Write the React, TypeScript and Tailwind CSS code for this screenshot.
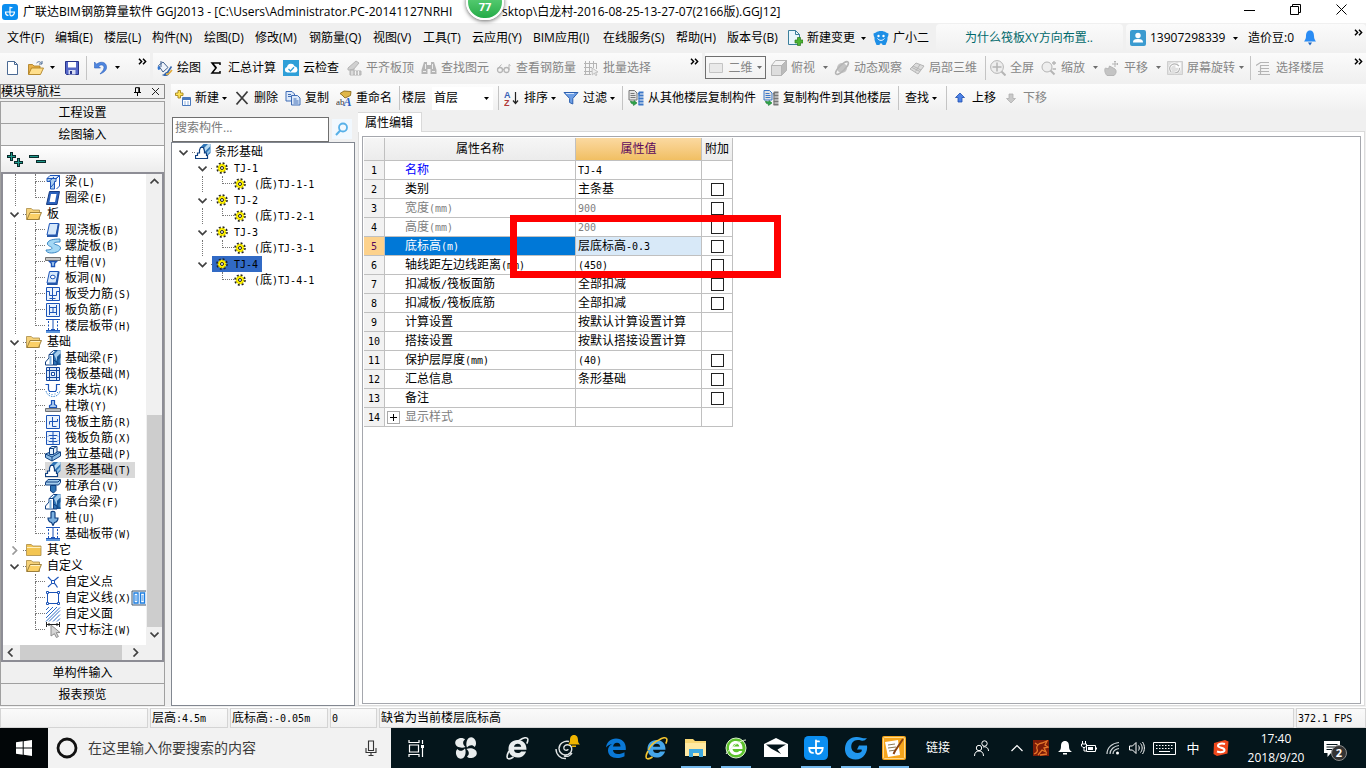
import React from "react";

type P = { children?: React.ReactNode };

const Svg = ({ children, c = "h-4 w-4", vb = "0 0 16 16" }: P & { c?: string; vb?: string }) => (
  <svg className={`${c} shrink-0`} viewBox={vb} fill="none" aria-hidden="true">
    {children}
  </svg>
);

/* Song-style text: CJK at 12px, Latin runs in a 6px-wide monospace */
const Song = ({ t }: { t: string }) => (
  <>
    {t.split(/([\x21-\x7e][\x20-\x7e]*)/).map((s, i) =>
      /^[\x21-\x7e]/.test(s) ? (
        <span key={i} className="font-['DejaVu_Sans_Mono',monospace] text-[10px] leading-none">{s}</span>
      ) : (
        s
      )
    )}
  </>
);

const Caret = ({ dim }: { dim?: boolean }) => (
  <svg className={`h-[3px] w-[5px] shrink-0 ${dim ? "text-[#6d6d6d]" : "text-black"}`} viewBox="0 0 5 3" aria-hidden="true">
    <path d="M0 0h5L2.5 3z" fill="currentColor" />
  </svg>
);
const Sep = () => <span className="h-6 w-px shrink-0 bg-[#c4c4c4]" />;
const More = () => (
  <button aria-label="更多" className="flex h-full w-4 shrink-0 items-start justify-center pt-[5px]">
    <svg className="h-[7px] w-[9px]" viewBox="0 0 9 7" fill="none" aria-hidden="true">
      <path d="M1 .8l2.6 2.7L1 6.2M5 .8l2.6 2.7L5 6.2" stroke="#000" strokeWidth="1.5" />
    </svg>
  </button>
);

/* ---------- toolbar icons ---------- */
const AppLogo = ({ c }: { c?: string }) => (
  <Svg c={c}>
    <rect width="16" height="16" rx="3" fill="#0b8ef0" />
    <path d="M8 3v7.500c0 1.500 1.800 1.800 3 .8 1-.8 1.500-2 1.500-3.300H3.500c0 2 1 3.300 2.500 3.300M8 3.600h2" stroke="#fff" strokeWidth="1.200" strokeLinecap="round" />
  </Svg>
);
const INew = () => (
  <Svg><path d="M2.500 1.500h7l3 3v10h-10z" fill="#fff" stroke="#4b6a94" /><path d="M9.500 1.500v3h3" stroke="#4b6a94" /></Svg>
);
const IOpen = () => (
  <Svg>
    <path d="M.5 14V4.500h4L6 6h6v8z" fill="#e8b14a" stroke="#a87818" strokeWidth=".8" />
    <path d="M.5 14.500L3.500 8H15.500l-3 6.500z" fill="#ffdf8c" stroke="#a87818" strokeWidth=".8" />
    <path d="M8.500 3c2-2 4-1.500 5 .5M14 1v3h-3" stroke="#4b6a94" />
  </Svg>
);
const ISave = () => (
  <Svg>
    <path d="M1.500 1.500h13v13h-12l-1-1z" fill="#5567c8" stroke="#27338b" />
    <path d="M4 2h8v5.500H4z" fill="#fff" /><path d="M4.500 10h7v4.500h-7z" fill="#d7dcf2" /><path d="M6 11h2v3H6z" fill="#27338b" />
  </Svg>
);
const IUndo = () => (
  <Svg><path d="M1.500 2v6h6L5.700 6.200c2-2.200 5.300-1.500 5.300 1.300 0 2.500-2 4-4 6.500 4-1.500 7-4 6.500-7.500C13 2 7.500.8 3.700 4.200z" fill="#4f86e0" stroke="#2b5fb8" strokeWidth=".6" /></Svg>
);
const IPaint = () => (
  <Svg>
    <path d="M1.500 5.500L6 2l5 5.500L6 12z" fill="#eef3fa" stroke="#41618f" /><path d="M4 1v6" stroke="#41618f" />
    <path d="M1 6c-.8 2-.3 4 1 4s1-3 1-3z" fill="#2f74d0" />
    <path d="M14.500 6.500l-4 6M10.500 12.500c-2-.5-2 2-3.500 2.500 2 .8 4.500.2 4.500-2z" stroke="#3568b0" strokeWidth="1.600" />
    <path d="M9 14.500c2-.2 3.500-1 6-4.500" stroke="#e2ab3c" strokeWidth="1.500" />
  </Svg>
);
const ISum = () => <Svg><path d="M12 5V3H4l4 5-4 5h8v-2M4.500 3.300l4 4.700" stroke="#000" strokeWidth="1.500" /></Svg>;
const ICloud = () => (
  <Svg>
    <rect width="16" height="16" fill="#2e9fd8" />
    <path d="M4.300 12.500a2.800 2.800 0 01-.3-5.500 4 4 0 017.600-.8 3.200 3.200 0 01.4 6.300z" fill="#fff" />
    <path d="M5.500 9l2 2L11 7.200" stroke="#2e9fd8" strokeWidth="1.300" />
  </Svg>
);
const G = "#b5b5b5";
const IFlat = () => <Svg><path d="M2 8l8-7 3 2-6 7H2z" fill="#d0d0d0" stroke={G} /><path d="M4 15v-5l4-1v2h7v4z" fill="#c4c4c4" stroke={G} /><path d="M6 11v4M9.500 11v4M12.500 11v4" stroke="#f2f2f2" /></Svg>;
const IBino = () => <Svg><path d="M3 2h3v3h4V2h3l2.500 8v4h-6V9h-3v5h-6v-4z" fill={G} /><path d="M4.500 4v5M11.500 4v5M2 11.500h3M11 11.500h3" stroke="#eee" /></Svg>;
const IGlass = () => <Svg><circle cx="4" cy="10" r="2.500" stroke={G} strokeWidth="1.300" /><circle cx="10.500" cy="10" r="2.500" stroke={G} strokeWidth="1.300" /><path d="M6.500 9.500h1.500M13 10V4.500l1.500 1M1.500 9l4-4.500" stroke={G} /></Svg>;
const IBatch = () => <Svg><path d="M2.500 1v14M6.500 1v14M10.500 1v7M1 3.500h13M1 7.500h8M1 11.500h8M13.500 3v6M1 14.500h7" stroke={G} /><path d="M9 8l6 4-2.500.6 1.500 2.400-1.300.6-1.400-2.500L9.300 15z" fill="#eee" stroke={G} strokeWidth=".8" /></Svg>;
const I2D = () => <Svg><path d="M1.500 3.500h13v9h-13z" fill="#e9e9e9" stroke="#c4c4c4" /></Svg>;
const ICube = () => <Svg><path d="M.5 5.500h10v10H.5z" fill="#ddd" stroke={G} /><path d="M.5 5.500l4-5h11l-5 5z" fill="#f3f3f3" stroke={G} /><path d="M10.500 5.500l5-5v10l-5 5z" fill="#bbb" stroke={G} /></Svg>;
const IOrbit = () => <Svg><circle cx="8" cy="8" r="5" fill="#c4c4c4" /><ellipse cx="8" cy="8" rx="8.500" ry="2.800" transform="rotate(-45 8 8)" stroke={G} strokeWidth="1.500" /></Svg>;
const ILocal = () => <Svg><path d="M1 9l6-6 8 3-6 8z" fill="#dcdcdc" stroke={G} /><path d="M4 6l8 4M6.500 11.500L11 4.500M3 7.500l8 4" stroke={G} /></Svg>;
const IFull = () => <Svg><circle cx="7" cy="7" r="6.400" fill="#eee" stroke={G} /><path d="M7 2.500v9M2.500 7h9" stroke={G} strokeWidth="1.500" /><path d="M11.500 11.500L15.500 15.500" stroke={G} strokeWidth="2" /></Svg>;
const IZoom = () => <Svg><circle cx="6" cy="7" r="5" fill="#eee" stroke={G} /><path d="M9.500 10.500l4 4" stroke={G} strokeWidth="2" /><path d="M11 3h4M13 1v4M11.500 9H15" stroke={G} strokeWidth="1.300" /></Svg>;
const IPan = () => <Svg><path d="M3 15.500c-2-2-3-6-1.500-7.500l3 1L5.500 6l5.500 3c2 2 1 5-1 6.500z" fill="#c4c4c4" stroke={G} /><path d="M11 1v6M8 4h6M10 2l1-1 1 1M13 3l1 1-1 1" stroke={G} /></Svg>;
const IRot = () => <Svg><path d="M.5 1.500h15v13H.5z" fill="#e0e0e0" stroke="#cfcfcf" /><path d="M4 12c-4-6 3-11 8-6M12.500 2.500v4h-4M12.500 8c0 3-2 5-5 5" stroke="#fff" strokeWidth="2.600" /><path d="M4 12c-4-6 3-11 8-6M12.500 8c0 3-2 5-5 5" stroke={G} strokeWidth="1.200" /></Svg>;
const IFloors = () => <Svg><path d="M0 5.500L4.500 2.500H13M4 5.500h9M4 8.500h9M2 11.500h11M2 14.500h12M4.500 6v8" stroke={G} strokeWidth="1.200" /></Svg>;
const IAdd = () => (
  <Svg>
    <path d="M7.500 7.500h8v8h-8z" fill="#fff" stroke="#4a79bd" /><path d="M8 8h7v2H8z" fill="#4a79bd" /><path d="M9 12h2M12 12h2M9 14h2M12 14h2" stroke="#8fb1de" />
    <path d="M3 .5h2.500v2.500H8v2.500H5.500V8H3V5.500H.5V3H3z" fill="#ffe357" stroke="#a4831d" strokeWidth=".9" />
  </Svg>
);
const IDel = () => <Svg><path d="M2.500 2l11 12M13.500 1.500l-11 13" stroke="#3c3c3c" strokeWidth="1.800" /></Svg>;
const ICopy = () => (
  <Svg>
    <path d="M1 1.500h6l2.500 2.500v7H1z" fill="#dce9fa" stroke="#3f6cb5" /><path d="M6.500 5.500h6L15 8v7H6.500z" fill="#dce9fa" stroke="#3f6cb5" />
    <path d="M3 4.500h3M3 6.500h3M8.500 9h3M8.500 11h5M8.500 13h5" stroke="#3f6cb5" />
  </Svg>
);
const IRename = () => (
  <Svg>
    <path d="M4 3.500L8 1l7 .5-.5 4L9 8 6 5z" fill="#dfb649" stroke="#8a6a1c" strokeWidth=".9" />
    <text x="0" y="15" fontSize="9" fontFamily="Liberation Serif" fill="#333">ab</text>
    <text x="7.500" y="15.500" fontSize="12" fontWeight="bold" fontStyle="italic" fontFamily="Liberation Serif" fill="#2b5fc0">A</text>
  </Svg>
);
const ISort = () => (
  <Svg>
    <text x="0" y="7.500" fontSize="9" fontWeight="bold" fontFamily="Liberation Sans" fill="#3761b5">A</text>
    <text x="0" y="15.500" fontSize="9" fontWeight="bold" fontFamily="Liberation Sans" fill="#b03a3a">Z</text>
    <path d="M11.500 2v11M9 10.500l2.500 3 2.500-3" stroke="#222" strokeWidth="1.200" />
  </Svg>
);
const IFilter = () => <Svg><path d="M1 2.500h14L9.800 8.500V14l-3.200-1.500v-4z" fill="#6e9fe6" stroke="#2c5fae" /><path d="M3 3.500h8" stroke="#d6e6fb" /></Svg>;
const IFrom = ({ a = "#777", b = "#3d78c8" }: { a?: string; b?: string }) => (
  <Svg>
    <path d="M1 .5h5.500L9 3v7H1z" fill="#e4e4e4" stroke={a} /><path d="M2.500 3.500h4M2.500 5.500h5M2.500 7.500h5" stroke={a} />
    <path d="M15.500 2.500h-4l-1 2M15.500 5.500h-5M15.500 8.500h-5M15.500 11.500h-5M15.500 14.500h-5" stroke={b} strokeWidth="1.800" /><path d="M11 3v12" stroke={b} />
    <path d="M2.500 11l3 1 .5-1.500L9 13l-3.500 2.500V14C3.500 14 2.500 13 2.500 11z" fill="#2fa54a" stroke="#1c7a32" strokeWidth=".6" />
  </Svg>
);
const IUp = ({ fill, stroke, flip }: { fill: string; stroke: string; flip?: boolean }) => (
  <Svg><path d={flip ? "M8 13L3.500 8.500h2.500V4h4v4.500h2.500z" : "M8 3l4.500 4.500H10V12H6V7.500H3.500z"} fill={fill} stroke={stroke} strokeWidth=".8" /></Svg>
);

function Tool({ w, icon, label, dim, caret, gap = "ml-2" }: { w: string; icon?: React.ReactNode; label: string; dim?: boolean; caret?: boolean; gap?: string }) {
  return (
    <button className={`flex h-6 shrink-0 items-center whitespace-nowrap ${w} ${dim ? "text-[#868686]" : "text-black"}`}>
      {icon && <span className="mr-1 flex">{icon}</span>}
      {label}
      {caret && <span className={`flex ${gap}`}><Caret dim={dim} /></span>}
    </button>
  );
}

/* ---------- tree icons ---------- */
const B = "#1c54b8";
const Folder = ({ open }: { open?: boolean }) =>
  open ? (
    <Svg>
      <path d="M.5 13.500V2.500h4.800l1.500 1.500h6.700v9.500z" fill="#f6d27a" stroke="#a98a45" strokeWidth=".8" />
      <path d="M1 13.500L4 6.500h11.500l-3 7z" fill="#fbd067" stroke="#8c7030" strokeWidth=".8" />
      <path d="M4.500 7.500h9.500" stroke="#fff1c4" />
    </Svg>
  ) : (
    <Svg><path d="M.5 13.500V2.500h4.800l1.500 1.500h8.200v9.500z" fill="#f3c552" stroke="#a98a45" strokeWidth=".8" /><path d="M1 5.500h13.500" stroke="#fff0be" /></Svg>
  );
const D = "#0f3f80";
const Beam = () => (
  <>
    <path d="M7 4l4-4h4.500v15H7z" fill="#2f74b5" />
    <path d="M9 4.500L13 .5h2.500v3L12 7v4z" fill="#a5cdec" />
    <path d="M12 15V7l3.500-3.500V8l-2 2v2.500l2 1V15z" fill="#1b5896" />
    <path d="M.5 15v-3L4 8V4.500h4.500V15z" fill="#fff" stroke={D} />
    <path d="M8.500 4.500v10.500M8.500 10l3.500 2v3H8.500M4.500 4L8.500.5H12" stroke={D} />
    <path d="M5.500 6v8.500" stroke="#7fb2df" strokeWidth="2" />
  </>
);
const Strip = () => (
  <>
    <path d="M5.500 3L8.500 0h7v9l-3.500 3z" fill="#2f74b5" />
    <path d="M9 4L13 0h2.500v2L10 7.500z" fill="#b9dbf2" />
    <path d="M10.500 9.500l5-5v3L12 11z" fill="#8ec0e6" />
    <path d="M.5 14.500v-3H2.500V9H4.500V6L5.500 3.500h3L9.500 7v2h2v2.500h1v3z" fill="#fff" stroke={D} strokeWidth="1.200" />
  </>
);
const Grid = ({ d }: { d: string }) => (
  <><path d="M1.500 1.500h13v13h-13z" fill="#eaf3fd" stroke={B} /><path d={d} stroke={B} /></>
);
const shapes: Record<string, React.ReactNode> = {
  liang: <><path d="M2 4.500l3-3h9.500L11 4.500z" fill="#e3eff9" stroke={B} /><path d="M2 4.500h9v3H9.500V15h-4V7.500H2z" fill="#a9cdee" stroke={B} /><path d="M11 5l3.500-3.500V12l-3 3M4 7.500L9 3M6 13l3.500-4" stroke={B} /></>,
  quan: <><path d="M4.500 1.500h10L12 14.500H1.500z" fill="#2b62bd" stroke="#173c82" /><path d="M6 4h5.500L10 12H4.500z" fill="#fff" /></>,
  ban: <><path d="M4.500 1.500h9L11 13H2z" fill="#d5e8fb" stroke={B} /><path d="M13 1.500h1.500v1L12.500 15H2v-2h9z" fill="#2456a8" /></>,
  luo: <path d="M1 12c3 0 6-.5 6-2S1.500 8 2.500 5 8 1 15 1v3c-3 0-6 .3-6 1.500S15.500 7 15.500 10s-5 5-9 5c-3 0-5.500-1-5.500-3z" fill="#a4d8f5" stroke="#3a86c4" />,
  mao: <><path d="M.5 3.500h15v3H.5z" fill="#c4c4c4" stroke="#6f6f6f" /><path d="M4.500 7.500h7L9.500 9.500v3h-3v-3z" fill="#b5d7f3" stroke={B} strokeWidth="1.400" /></>,
  dong: <><path d="M4.500 1.500h9L11 13H2z" fill="#d5e8fb" stroke={B} /><path d="M13 1.500h1.500v1L12.500 15H2v-2h9z" fill="#2456a8" /><ellipse cx="7.800" cy="7" rx="2.400" ry="1.800" stroke={B} fill="#fff" /></>,
  shou: <Grid d="M2 5.500h2.500M7.500 2v12M4.500 5.500v4h7v-4H14M4.500 12.500h6" />,
  fu: <Grid d="M4.500 3v10M11.500 3v10M4.500 5.500h7M4.500 10.500h7M8 5.500v5" />,
  dai: <><path d="M1 12h14v3H1z" fill="#5d96dc" /><path d="M1 1.500h14M8 2v10M6 11.500h4M1 12.500h14" stroke={B} /><path d="M3.500 3v9M12.500 3v9" stroke={B} strokeDasharray="2 1.500" /></>,
  beam: <Beam />,
  fa: <><path d="M1.500 1.500h13v13h-13z" fill="#dceafa" stroke="#15489f" /><path d="M4.500 1v14M11.500 1v14M1 4.500h14M1 11.500h14" stroke="#15489f" /><path d="M6.500 6.500h3v3h-3z" fill="#fff" stroke="#15489f" /></>,
  keng: <><path d="M.5 2.500h3v5l1 2h6l1-2v-5h3.500" stroke={B} strokeWidth="1.200" /><path d="M1 9c1 4 4 5.500 7 5.500S14 13 15 9M4.500 11v1M7 12v1M10 11.500v1M12.500 10v1" stroke="#4b8fd4" strokeDasharray="1.500 1" /></>,
  dun: <><path d="M4.500 9.500V7.500l2-1v-4h3v4l2 1v2z" fill="#aecdf0" stroke={B} strokeWidth="1.200" /><path d="M.5 10.500h15v3H.5z" fill="#b9bcc0" stroke="#6d7278" /></>,
  zhu: <Grid d="M4.500 7.500h8M7.500 3v9.500M4.500 7.500v3M7.500 12.500h4M12.500 5v2.500" />,
  fu2: <Grid d="M8 2v12M4 5.500h8M5 8.500h6M4 11.500h8M4 5.500l-1 1M12 5.500l1 1M4 11.500l-1-1M12 11.500l1-1" />,
  du: <><path d="M.5 8l6-2.500L15.500 6v4L7 15 .5 11.500z" fill="#8ebfe6" stroke={D} /><path d="M.5 8L7 11l8.500-5M7 11v4" stroke={D} /><path d="M4.500 2l2.500-1.500h5V6L8.500 8.500h-4z" fill="#e4f0fa" stroke={D} /><path d="M8.500 2.500v6M4.500 2.500h4l3-2" stroke={D} /></>,
  strip: <Strip />,
  tai: <><path d="M.5 4.500L3 1.500h12.500v3l-2 2.500H.5z" fill="#a5cdec" stroke={D} /><path d="M.5 4h12.500L15 2" stroke={D} /><path d="M5.500 7.500H11v5L8.500 15l-3-2z" fill="#2f74b5" stroke={D} /></>,
  pile: <path d="M6 8V2.500C6 1 10 1 10 2.500V8h3c0 2.500-1.500 4-3.500 4.500L8 15.500l-1.500-3C4.500 12 3 10.500 3 8z" fill="#7cb1e0" stroke={D} strokeWidth="1.200" />,
  dian: <><path d="M3 3c2 2 3 3.500 5 5s3 3 4.500 5.500M13.500 3C11 5 9.500 6 8 8s-3 3-5 5" stroke={B} strokeWidth="1.200" /><path d="M6.500 6.500h3v3h-3z" fill="#fff" stroke={B} /></>,
  xian: <><path d="M2.500 2.500h11v11h-11z" stroke={B} /><path d="M1.500 1.500h2v2h-2zM12.500 1.500h2v2h-2zM1.500 12.500h2v2h-2zM12.500 12.500h2v2h-2z" fill="#fff" stroke={B} /></>,
  mian: <path d="M1 4l3-3M1 8l7-7M1 12l11-11M1 15.500L15 1.500M4 15.500L15 4.500M8 15.500l7-7M12 15.500l3-3" stroke="#2c6bc4" />,
  chi: <><path d="M1.500 0v5M14.500 0v5M2 2.500h12M4 1v3M12 1v3" stroke="#222" /><path d="M6 3l9 7.500-3.800.2 2.200 3.800-2 1-2-3.800L6 14z" fill="#d6d6d6" stroke="#8b8b8b" /></>,
};

const Chev = ({ right }: { right?: boolean }) => (
  <Svg c="h-[9px] w-[9px]" vb="0 0 9 9">
    <path d={right ? "M2.500 .5l4 4-4 4" : "M.5 2.500l4 4 4-4"} stroke={right ? "#9a9a9a" : "#404040"} strokeWidth="1.700" />
  </Svg>
);

type Item = [string, string];
const groups: { name?: string; open?: boolean; items: Item[] }[] = [
  { items: [["liang", "梁(L)"], ["quan", "圈梁(E)"]], open: true },
  {
    name: "板", open: true,
    items: [["ban", "现浇板(B)"], ["luo", "螺旋板(B)"], ["mao", "柱帽(V)"], ["dong", "板洞(N)"], ["shou", "板受力筋(S)"], ["fu", "板负筋(F)"], ["dai", "楼层板带(H)"]],
  },
  {
    name: "基础", open: true,
    items: [["beam", "基础梁(F)"], ["fa", "筏板基础(M)"], ["keng", "集水坑(K)"], ["dun", "柱墩(Y)"], ["zhu", "筏板主筋(R)"], ["fu2", "筏板负筋(X)"], ["du", "独立基础(P)"], ["strip", "条形基础(T)"], ["tai", "桩承台(V)"], ["beam", "承台梁(F)"], ["pile", "桩(U)"], ["dai", "基础板带(W)"]],
  },
  { name: "其它", open: false, items: [] },
  { name: "自定义", open: true, items: [["dian", "自定义点"], ["xian", "自定义线(X)"], ["mian", "自定义面"], ["chi", "尺寸标注(W)"]] },
];

function NavTree() {
  return (
    <ul className="min-w-0 flex-1 overflow-hidden bg-white leading-4">
      {groups.map((g, gi) => (
        <li key={gi}>
          {g.name && (
            <button className="flex h-4 items-center pl-[7px]">
              <Chev right={!g.open} />
              <span className="ml-1 w-[3px] border-t border-dotted border-[#777]" />
              <span className="flex"><Folder open={g.open} /></span>
              <span className="ml-[5px]">{g.name}</span>
            </button>
          )}
          <ul>
            {g.items.map(([k, t], i) => (
              <li key={t + i} className="flex h-4 items-center whitespace-nowrap pl-3">
                <span className={`h-4 w-5 shrink-0 border-l border-dotted ${gi === groups.length - 1 ? "border-transparent" : "border-[#777]"}`} />
                <span className="flex h-4 w-[10px] shrink-0 flex-col">
                  <span className="h-2 border-b border-l border-dotted border-[#777]" />
                  {i < g.items.length - 1 && <span className="h-2 border-l border-dotted border-[#777]" />}
                </span>
                <button className={`flex h-4 items-center pr-1 ${k === "strip" ? "bg-[#d9d9d9]" : ""}`}>
                  <Svg>{shapes[k]}</Svg>
                  <span className="ml-1"><Song t={t} /></span>
                </button>
                {k === "xian" && (
                  <svg className="-ml-1 h-4 w-4 shrink-0" viewBox="0 0 16 16" fill="none" aria-hidden="true">
                    <path d="M1 1h15v14H1z" fill="#eaf4ff" stroke="#44586e" />
                    <path d="M3 3h4v10H3zM9.500 3h4v10h-4z" fill="#fff" stroke="#1f7fe0" strokeWidth="1.300" />
                    <path d="M4 6h2M4 8h2M4 10h2M10.500 6h2M10.500 8h2M10.500 10h2" stroke="#1f7fe0" />
                  </svg>
                )}
              </li>
            ))}
          </ul>
        </li>
      ))}
    </ul>
  );
}

const NavButton = ({ children }: P) => (
  <button className="flex h-[22px] w-full shrink-0 items-center justify-center border-b border-[#a0a0a0] bg-[#f0f0f0] pt-px">{children}</button>
);
const Arrow = ({ d, label }: { d: string; label: string }) => (
  <button aria-label={label} className="flex h-[15px] w-[15px] shrink-0 items-center justify-center">
    <Svg c="h-[9px] w-[9px]" vb="0 0 9 9"><path d={d} stroke="#404040" strokeWidth="1.700" /></Svg>
  </button>
);

function LeftPanel() {
  return (
    <aside className="flex w-[165px] shrink-0 flex-col">
      <header className="flex h-[15px] shrink-0 items-center border border-[#8a8a8a] leading-[13px]">
        <span className="-mt-px text-[12px]">模块导航栏</span>
        <button aria-label="固定" className="ml-auto flex">
          <Svg c="h-[9px] w-[9px]" vb="0 0 9 9"><path d="M2.500 5V.7h4V5M1 5.500h7M4.500 5.500V9M5.800 1v4" stroke="#000" /></Svg>
        </button>
        <button aria-label="关闭" className="mr-1 ml-[9px] flex">
          <Svg c="h-[9px] w-[9px]" vb="0 0 9 9"><path d="M1 1l7 7M8 1L1 8" stroke="#222" /></Svg>
        </button>
      </header>
      <div className="mt-[2px] flex min-h-0 flex-1 flex-col overflow-hidden border border-b-0 border-[#a0a0a0]">
        <NavButton>工程设置</NavButton>
        <NavButton>绘图输入</NavButton>
        <div className="flex h-[26px] shrink-0 items-center gap-[6px] bg-linear-to-b from-white to-[#ececec] pl-[5px]">
          <button aria-label="全部展开" className="flex">
            <Svg c="h-[17px] w-[17px]" vb="0 0 17 17">
              <path d="M4 1h3v3h3v3H7v3H4V7H1V4h3z" fill="#0b2b2b" /><path d="M11 7h3v3h3v3h-3v3h-3v-3H8v-3h3z" fill="#0b2b2b" />
              <path d="M5.500 2v7M2 5.500h7M12.500 8v7M9 11.500h7" stroke="#1f9a8c" />
            </Svg>
          </button>
          <button aria-label="全部折叠" className="flex">
            <Svg c="h-[17px] w-[17px]" vb="0 0 17 17"><path d="M0 4h10v3H0zM7 9h10v3H7z" fill="#0b2b2b" /><path d="M1 5.500h8M8 10.500h8" stroke="#1f9a8c" /></Svg>
          </button>
        </div>
        <div className="flex min-h-0 flex-1 flex-col overflow-hidden border-2 border-[#8d8d95] bg-[#f0f0f0]">
          <div className="flex min-h-0 flex-1">
            <NavTree />
            <div className="flex w-4 shrink-0 flex-col items-center">
              <Arrow label="向上" d="M.5 6.500l4-4 4 4" />
              <span className="flex-1" />
              <span className="h-[212px] w-[15px] bg-[#cdcdcd]" />
              <Arrow label="向下" d="M.5 2.500l4 4 4-4" />
              <span className="h-[3px]" />
            </div>
          </div>
          <div className="flex h-[15px] shrink-0 items-center">
            <Arrow label="向左" d="M6.500 .5l-4 4 4 4" />
            <span className="ml-[2px] h-full w-[102px] bg-[#cdcdcd]" />
            <span className="ml-[6px] flex"><Arrow label="向右" d="M2.500 .5l4 4-4 4" /></span>
          </div>
        </div>
        <NavButton>单构件输入</NavButton>
        <NavButton>报表预览</NavButton>
      </div>
    </aside>
  );
}

const Gear = () => (
  <Svg c="h-3 w-3" vb="0 0 12 12">
    <circle cx="6" cy="6" r="5" stroke="#222" strokeWidth="1.600" strokeDasharray="2 1.930" />
    <circle cx="6" cy="6" r="4.300" fill="#fff200" />
    <circle cx="6" cy="6" r="3.800" stroke="#55520a" strokeWidth=".8" strokeDasharray="1 2" />
    <circle cx="6" cy="6" r="1.500" fill="#fff" stroke="#222" />
  </Svg>
);

function MiddlePanel() {
  return (
    <section className="flex w-[184px] shrink-0 flex-col pt-1">
      <div className="flex h-[26px] shrink-0 items-center">
        <input aria-label="搜索构件" placeholder="搜索构件..." className="ml-px h-[25px] w-[157px] border border-[#6f6f6f] bg-white px-[2px] pb-1 text-[12px] outline-none placeholder:text-[#7a7a7a]" />
        <button aria-label="搜索" className="ml-[3px] flex h-5 w-5 items-center justify-center bg-[#f1f8fe]">
          <Svg c="h-[14px] w-[14px]" vb="0 0 14 14"><circle cx="8" cy="5.500" r="4" stroke="#57b0e8" strokeWidth="1.800" /><path d="M5.200 8.500L1 13" stroke="#57b0e8" strokeWidth="2" /></Svg>
        </button>
      </div>
      <div className="min-h-0 flex-1 overflow-hidden border border-[#828790] bg-white pt-px">
        <ul className="leading-4">
          <li>
            <button className="flex h-4 items-center pl-[7px]">
              <Chev />
              <span className="ml-1 w-[3px] border-t border-dotted border-[#777]" />
              <Svg>{shapes.strip}</Svg>
              <span className="ml-1">条形基础</span>
            </button>
            <ul>
              {[1, 2, 3, 4].map((n) => (
                <li key={n}>
                  <div className="flex h-4 items-center pl-[26px]">
                    <Chev />
                    <span className="ml-1 w-px border-t border-dotted border-[#777]" />
                    <button className={`flex h-4 items-center pr-1 pl-1 ${n === 4 ? "bg-[#316ac5]" : ""}`}>
                      <Gear />
                      <span className="ml-[6px]"><Song t={`TJ-${n}`} /></span>
                    </button>
                  </div>
                  <div className="flex h-4 items-center pl-[30px]">
                    <span className={`h-4 w-5 border-l border-dotted ${n === 4 ? "border-transparent" : "border-[#777]"}`} />
                    <span className="-mt-2 h-2 w-[12px] border-b border-l border-dotted border-[#777]" />
                    <button className="flex h-4 items-center">
                      <Gear />
                      <span className="ml-2"><Song t="(" />底<Song t={`)TJ-${n}-1`} /></span>
                    </button>
                  </div>
                </li>
              ))}
            </ul>
          </li>
        </ul>
      </div>
    </section>
  );
}

type Row = { name: string; value: string; check?: boolean; cls?: string };
const rows: Row[] = [
  { name: "名称", value: "TJ-4", cls: "text-[#0000ff]" },
  { name: "类别", value: "主条基", check: true },
  { name: "宽度(mm)", value: "900", check: true, cls: "text-[#808080]" },
  { name: "高度(mm)", value: "200", check: true, cls: "text-[#808080]" },
  { name: "底标高(m)", value: "层底标高-0.3", check: true },
  { name: "轴线距左边线距离(mm)", value: "(450)", check: true },
  { name: "扣减板/筏板面筋", value: "全部扣减", check: true },
  { name: "扣减板/筏板底筋", value: "全部扣减", check: true },
  { name: "计算设置", value: "按默认计算设置计算" },
  { name: "搭接设置", value: "按默认搭接设置计算" },
  { name: "保护层厚度(mm)", value: "(40)", check: true },
  { name: "汇总信息", value: "条形基础", check: true },
  { name: "备注", value: "", check: true },
  { name: "显示样式", value: "", cls: "text-[#808080]" },
];

function PropertyPanel() {
  const cell = "h-[19px] border-r border-b border-[#c0c0c0] p-0 leading-4";
  return (
    <section className="flex min-w-0 flex-1 flex-col">
      <div className="flex h-5 shrink-0">
        <button className="h-[21px] border-t border-r border-[#d9d9d9] bg-white pr-2 pl-[7px] leading-5">属性编辑</button>
        <span className="flex-1 border-b border-[#d9d9d9] bg-[#f0f0f0]" />
      </div>
      <div className="flex min-h-0 flex-1 flex-col border-r border-b border-l border-[#dcdcdc] bg-white p-[3px] pt-1 pb-px">
        <div className="min-h-0 flex-1 border border-[#a5a7ad] pt-px pl-px">
          <div className="relative">
            <table className="w-[369px] table-fixed border-separate border-spacing-0">
              <thead>
                <tr className="h-[23px] bg-linear-to-b from-[#f6f6f6] to-[#ebebeb]">
                  <th className="w-[21px] border-r border-b border-[#c0c0c0] p-0" aria-label="序号" />
                  <th className="w-[191px] border-r border-b border-[#c0c0c0] p-0 font-normal">属性名称</th>
                  <th className="w-[126px] border-r border-b border-[#c0c0c0] bg-linear-to-b from-[#fbd9a0] to-[#f1bf62] p-0 font-normal text-[#5c0a5c]">属性值</th>
                  <th className="w-[31px] border-r border-b border-[#c0c0c0] p-0 font-normal">附加</th>
                </tr>
              </thead>
              <tbody>
                {rows.map((r, i) => {
                  const sel = i === 4;
                  return (
                    <tr key={i} className={r.cls === "text-[#808080]" ? "text-[#808080]" : ""}>
                      <td className={`${cell} text-center ${sel ? "bg-[#fdd28c] text-[#5c0a5c]" : "bg-[#f2f2f2] text-black"}`}><Song t={String(i + 1)} /></td>
                      <td className={`${cell} whitespace-nowrap ${sel ? "bg-[#0078d7] text-white" : ""} ${r.cls ?? ""}`}>
                        <div className="flex items-center">
                          <span className="flex w-5 shrink-0 pl-[2px]">
                            {i === 13 && (
                              <button aria-label="展开" className="flex h-[13px] w-[13px] items-center justify-center border border-[#a9a9a9] bg-white">
                                <Svg c="h-[7px] w-[7px]" vb="0 0 7 7"><path d="M0 3.500h7M3.500 0v7" stroke="#000" /></Svg>
                              </button>
                            )}
                          </span>
                          <span><Song t={r.name} /></span>
                        </div>
                      </td>
                      <td className={`${cell} pl-[2px] ${sel ? "bg-[#d8e9f8]" : ""}`}><Song t={r.value} /></td>
                      <td className={`${cell} text-center`}>
                        {r.check && (
                          <input type="checkbox" aria-label={`附加 ${r.name}`} className="mx-auto mt-px block h-[13px] w-[13px] appearance-none border border-[#222] bg-white" />
                        )}
                      </td>
                    </tr>
                  );
                })}
              </tbody>
            </table>
            <div className="pointer-events-none absolute top-[77px] left-[146px] h-[63px] w-[271px] border-[7px] border-[#ff0000]" />
          </div>
        </div>
      </div>
    </section>
  );
}

const menus: [string, string][] = [
  ["文件(F)", "w-12"], ["编辑(E)", "w-[49px]"], ["楼层(L)", "w-12"], ["构件(N)", "w-[52px]"], ["绘图(D)", "w-[51px]"],
  ["修改(M)", "w-[54px]"], ["钢筋量(Q)", "w-16"], ["视图(V)", "w-[50px]"], ["工具(T)", "w-[49px]"], ["云应用(Y)", "w-[61px]"],
  ["BIM应用(I)", "w-[70px]"], ["在线服务(S)", "w-[73px]"], ["帮助(H)", "w-[51px]"], ["版本号(B)", "w-[60px]"],
];

function TopBars() {
  const strip = "flex items-center bg-linear-to-b from-[#fbfbfb] to-[#f0f0f0]";
  return (
    <>
      <header className="flex h-[23px] shrink-0 items-center bg-white pl-[2px]">
        <AppLogo />
        <h1 className="ml-[5px] flex whitespace-nowrap text-[12px]">
          <span className="w-[479px]">广联达BIM钢筋算量软件 GGJ2013 - [C:\Users\Administrator.PC-20141127NRHI</span>
          <span>sktop\白龙村-2016-08-25-13-27-07(2166版).GGJ12]</span>
        </h1>
        <div className="mr-[19px] ml-auto flex items-center gap-[35px] pb-1">
          <button aria-label="最小化"><Svg c="h-[11px] w-[11px]" vb="0 0 11 11"><path d="M0 6.500h11" stroke="#000" /></Svg></button>
          <button aria-label="还原"><Svg c="h-[11px] w-[11px]" vb="0 0 11 11"><path d="M.5 2.500h8v8h-8zM2.500 2.500v-2h8v8h-2" stroke="#000" /></Svg></button>
          <button aria-label="关闭"><Svg c="h-[11px] w-[11px]" vb="0 0 11 11"><path d="M.5.5l10 10M10.500.5l-10 10" stroke="#000" /></Svg></button>
        </div>
      </header>
      <div className="flex h-[30px] shrink-0 items-center">
        <nav className="flex shrink-0 items-center pl-[7px]">
          {menus.map(([t, w]) => <button key={t} className={`text-left whitespace-nowrap ${w}`}>{t}</button>)}
        </nav>
        <Tool w="w-[86px]" caret gap="ml-[6px]" label="新建变更" icon={
          <Svg><path d="M1.500.5h7l4 4v10h-11z" fill="#eaf7fd" stroke="#3b7f9c" /><path d="M8.500.500v4h4" stroke="#3b7f9c" /><path d="M10.500 7.500h3v2.500H16v3h-2.500v2.500h-3V13H8v-3h2.500z" fill="#4cb432" stroke="#2d7a1c" strokeWidth=".7" /></Svg>
        } />
        <Tool w="w-[63px]" label="广小二" icon={
          <Svg><path d="M3 2.500C5 .5 11 .5 13 2.500l2.500 1c0 2-.5 3-1 4C15 11 13 13 12.500 15h-3l-.5-1.500H7L6.500 15h-3C3 13 1 11 1.500 7.500c-.5-1-1-2-1-4z" fill="#1e8fe6" /><circle cx="5.500" cy="6" r="1.200" fill="#fff" /><circle cx="10.500" cy="6" r="1.200" fill="#fff" /><path d="M4.500 8.500c2 2.500 5 2.500 7 0" stroke="#fff" /></Svg>
        } />
        <div className={`${strip} h-[28px] w-[187px] shrink-0 rounded-sm pl-[29px]`}>
          <a href="#faq" className="whitespace-nowrap text-[#00696b]">为什么筏板XY方向布置..</a>
        </div>
        <div className={`${strip} ml-[3px] h-[28px] min-w-0 flex-1 rounded-sm pl-1`}>
          <Tool w="w-[118px]" caret label="13907298339" icon={
            <Svg><rect width="16" height="16" rx="2" fill="#3b9bd0" /><circle cx="8" cy="5.500" r="2.700" fill="#fff" /><path d="M3 12.500c0-3 2-3.500 5-3.500s5 .5 5 3.500z" fill="#fff" /></Svg>
          } />
          <span className="w-[54px] whitespace-nowrap">造价豆:0</span>
          <button aria-label="通知" className="flex">
            <Svg><path d="M8 .5c-3 0-4 2.500-4 5.500 0 3-1 4-2 5.500h12c-1-1.500-2-2.500-2-5.500 0-3-1-5.500-4-5.500z" fill="#2a8cf4" /><path d="M6 12.500h4L8 15.500z" fill="#1c64c0" /></Svg>
          </button>
          <span className="ml-auto flex h-full"><More /></span>
        </div>
      </div>
      <div className="flex h-[30px] shrink-0 items-center pb-px">
        <div className={`${strip} h-[29px] w-[150px] shrink-0 pl-[5px]`}>
          <button aria-label="新建" className="flex w-[23px]"><INew /></button>
          <button aria-label="打开" className="flex w-9 items-center gap-[6px]"><IOpen /><Caret /></button>
          <button aria-label="保存" className="flex w-[22px]"><ISave /></button>
          <Sep />
          <button aria-label="撤销" className="ml-[6px] flex items-center gap-[6px]"><IUndo /><Caret /></button>
          <span className="ml-auto flex h-full"><More /></span>
        </div>
        <div className={`${strip} ml-[3px] h-[29px] w-[549px] shrink-0 pl-1`}>
          <Tool w="w-[51px]" label="绘图" icon={<IPaint />} />
          <Tool w="w-[75px]" label="汇总计算" icon={<ISum />} />
          <Tool w="w-[63px]" label="云检查" icon={<ICloud />} />
          <Tool w="w-[75px]" dim label="平齐板顶" icon={<IFlat />} />
          <Tool w="w-[75px]" dim label="查找图元" icon={<IBino />} />
          <Tool w="w-[87px]" dim label="查看钢筋量" icon={<IGlass />} />
          <Tool w="w-[75px]" dim label="批量选择" icon={<IBatch />} />
          <span className="ml-auto flex h-full"><More /></span>
        </div>
        <div className={`${strip} ml-[3px] h-[29px] min-w-0 flex-1`}>
          <button className="mr-[5px] flex h-[23px] w-[61px] shrink-0 items-center justify-between border border-[#6f6f6f] pr-[3px] pl-[2px] text-[#868686]">
            <I2D />二维<Caret dim />
          </button>
          <Tool w="w-[63px]" dim caret label="俯视" icon={<ICube />} />
          <Tool w="w-[75px]" dim label="动态观察" icon={<IOrbit />} />
          <Tool w="w-[76px]" dim label="局部三维" icon={<ILocal />} />
          <Sep />
          <Tool w="ml-1 w-[51px]" dim label="全屏" icon={<IFull />} />
          <Tool w="w-[63px]" dim caret label="缩放" icon={<IZoom />} />
          <Tool w="w-[63px]" dim caret label="平移" icon={<IPan />} />
          <Tool w="w-[83px]" dim caret gap="ml-1" label="屏幕旋转" icon={<IRot />} />
          <Sep />
          <Tool w="ml-[5px]" dim label="选择楼层" icon={<IFloors />} />
          <span className="ml-auto flex h-full"><More /></span>
        </div>
      </div>
    </>
  );
}

function ComponentToolbar() {
  return (
    <div className="flex h-[28px] shrink-0 items-center bg-linear-to-b from-[#fdfdfd] to-[#f0f0f0] pl-1">
      <Tool w="w-[59px]" caret gap="ml-[3px]" label="新建" icon={<IAdd />} />
      <Tool w="w-[51px]" label="删除" icon={<IDel />} />
      <Tool w="w-[51px]" label="复制" icon={<ICopy />} />
      <Tool w="w-[63px]" label="重命名" icon={<IRename />} />
      <Sep />
      <label htmlFor="floor" className="ml-[2px] w-[30px] shrink-0 whitespace-nowrap">楼层</label>
      <span className="mr-[5px] flex h-[23px] w-[61px] shrink-0 items-center bg-white pr-1">
        <select id="floor" className="h-full min-w-0 flex-1 appearance-none bg-transparent pl-[2px] text-[12px] outline-none">
          <option>首层</option>
        </select>
        <Caret />
      </span>
      <Sep />
      <Tool w="ml-[5px] w-[59px]" caret gap="ml-[3px]" label="排序" icon={<ISort />} />
      <Tool w="w-[59px]" caret gap="ml-[3px]" label="过滤" icon={<IFilter />} />
      <Sep />
      <Tool w="ml-[5px] w-[135px]" label="从其他楼层复制构件" icon={<IFrom />} />
      <Tool w="w-[135px]" label="复制构件到其他楼层" icon={<IFrom a="#3d78c8" b="#777" />} />
      <Sep />
      <Tool w="ml-[6px] w-[41px]" caret gap="ml-[3px]" label="查找" />
      <Sep />
      <Tool w="ml-[5px] w-[51px]" label="上移" icon={<IUp fill="#4d82e6" stroke="#1f4fae" />} />
      <Tool w="" dim label="下移" icon={<IUp flip fill="#c9c9c9" stroke="#b0b0b0" />} />
    </div>
  );
}

const StatusCell = ({ w, t }: { w: string; t: string }) => (
  <span className={`flex h-[20px] items-center whitespace-nowrap border border-[#d4d4d4] bg-linear-to-b from-[#fafafa] to-[#f1f1f1] pl-px ${w}`}>
    <span><Song t={t} /></span>
  </span>
);

const Task = ({ label, w = "w-10", on, children }: P & { label: string; w?: string; on?: boolean }) => (
  <button aria-label={label} className={`flex h-10 shrink-0 flex-col items-center ${w}`}>
    <span className="flex flex-1 items-center pt-[2px]">{children}</span>
    <span className={`h-[2px] w-[30px] shrink-0 ${on ? "bg-[#76b9ed]" : ""}`} />
  </button>
);
const T6 = "h-6 w-6";
const EGlyph = ({ fill }: { fill: string }) => (
  <path d="M2 11.500C2.800 6 6.500 2.500 12 2.500c6 0 9.800 4 9.800 9.500v2H9c.2 2.600 2 4 5 4 2.400 0 4.500-.7 6.500-1.800v4c-2 1.200-4.500 1.800-7.500 1.800C7.500 22 4 19 4 14.500c0-2.700 1.300-5 4-6.500-2.500.5-4.500 1.700-6 3.500zM9 10.500h7.500c0-2.200-1.200-3.700-3.500-3.700S9.500 8.200 9 10.500z" fill={fill} />
);
const IE = ({ fill, ring }: { fill: string; ring: string }) => (
  <Svg c={T6} vb="0 0 24 24">
    <path d="M21.500 13.800H9c.2 2 1.500 3.300 3.700 3.300 1.600 0 2.700-.6 3.400-1.700h5C19.900 19.200 16.800 21.500 12.500 21.500 7 21.500 3.500 18 3.500 12.800S7.200 4 12.500 4c5.600 0 9.200 3.800 9 9.800zM9 10.700h7.200c-.3-1.900-1.500-3-3.500-3s-3.300 1.100-3.700 3z" fill={fill} />
    <path d="M4 15C1.500 19.500 1.500 22.500 3.500 22.800c1.600.2 3.500-.8 5-1.800M15 4c3.500-2.500 7-3 7.700-1.300.5 1.300 0 3-.9 5M4.500 14C6.500 9 12 5 16 3.500" stroke={ring} strokeWidth="1.600" />
  </Svg>
);

function Taskbar() {
  return (
    <footer className="flex h-10 shrink-0 items-center bg-[#04151b] text-white">
      <button aria-label="开始" className="flex h-10 w-12 shrink-0 items-center justify-center bg-[#020608]">
        <Svg><path d="M0 2.300l6.700-1v6.200H0zM7.700 1.200L16 0v7.500H7.700zM0 8.500h6.700v6.200L0 13.700zM7.700 8.500H16V16l-8.300-1.200z" fill="#fff" /></Svg>
      </button>
      <div className="flex h-10 w-[343px] shrink-0 items-center bg-[#f2f2f2] pr-3 pl-2 text-black">
        <Svg c="h-[22px] w-[22px]" vb="0 0 22 22"><circle cx="11" cy="11" r="9" stroke="#111" strokeWidth="2.800" /></Svg>
        <input aria-label="搜索" placeholder="在这里输入你要搜索的内容" className="ml-[10px] min-w-0 flex-1 bg-transparent text-[14px] outline-none placeholder:text-[#3c3c3c]" />
        <button aria-label="语音" className="flex"><Svg><path d="M5.500 1h5v9.500h-5zM3 8v4.500h10V8M8 12.500V16M5.500 15.500h5" stroke="#333" strokeWidth="1.100" /></Svg></button>
      </div>
      <div className="flex min-w-0 flex-1 items-center pl-[5px]">
        <Task label="任务视图"><Svg c="h-[17px] w-[17px]" vb="0 0 17 17"><path d="M1 0v2.500h10V0M1.500 5h9v7h-9zM1 17v-2.500h10V17M14.500 0v4M14.500 8v9" stroke="#fff" strokeWidth="1.200" /><path d="M13 5h3v3h-3z" fill="#fff" /></Svg></Task>
        <Task label="应用中心" w="w-[60px]">
          <Svg c={T6} vb="0 0 24 24">
            <path d="M11.500 11C8 12.500 1 11.500 1.200 6.500 1.500 2 9 .5 11 3.500 8.500 5 8.500 8.500 11.500 11zM13 11.500C11.500 8 12.500 1.200 17.500 1.200 22 1.500 23.500 9 20.500 11 19 8.500 15.500 8.500 13 11.500zM12.500 13c3.500-1.500 10.500-.5 10.300 4.500C22.500 22 15 23.500 13 20.500c2.500-1.500 2.500-5-.5-7.500zM11 12.500c1.500 3.500.5 10.300-4.500 10.300C2 22.500.5 15 3.500 13c1.500 2.500 5 2.500 7.500-.5z" fill="#e9edee" />
          </Svg>
        </Task>
        <Task label="浏览器" w="w-[42px]"><IE fill="#e9edee" ring="#e9edee" /></Task>
        <Task label="提醒" w="w-[58px]">
          <Svg c="h-[26px] w-[26px]" vb="0 0 26 26">
            <path d="M14 14c0 1.500-3 2-4 0-1-3 2-5 5-4 4 1.500 3.500 8-1 9.500-5 1.500-9-2-9-6 0-5 5-8 10-7M2 14c0 6 5 10 10 9.500M18 18c-1.500 3-5 4-8 3" stroke="#dfe3e4" strokeWidth="1.400" />
            <path d="M20 0c-3 0-4 2.500-4 5 0 2-.5 3-2 4.500h12C24.500 8 24 7 24 5c0-2.500-1-5-4-5z" fill="#f0b400" /><path d="M18 10.500h4v1.500h-4z" fill="#f0b400" />
          </Svg>
        </Task>
        <Task label="Edge"><Svg c={T6} vb="0 0 24 24"><EGlyph fill="#0a78d6" /></Svg></Task>
        <Task label="IE"><IE fill="#45a6ea" ring="#f4c430" /></Task>
        <Task label="文件资源管理器" on>
          <Svg c={T6} vb="0 0 24 24"><path d="M1 3h8l2 2h11v15H1z" fill="#f8d775" /><path d="M1 7h21v13H1z" fill="#ffe9a2" /><path d="M5 21v-8h14v8h-4v-4H9v4z" fill="#3fa9e0" /></Svg>
        </Task>
        <Task label="安全浏览器" on>
          <Svg c={T6} vb="0 0 24 24"><circle cx="12" cy="12" r="10" fill="#5cc22c" stroke="#d8f2c8" /><path d="M18.500 13H8.500c.2 2 1.500 3.200 3.500 3.200 1.500 0 2.500-.4 3.300-1.300h3C17.500 17.500 15 19 12 19c-4.200 0-7-2.700-7-7s2.800-7 7-7 6.800 3 6.500 8zM8.600 10.500h6.700c-.3-1.700-1.500-2.700-3.300-2.700s-3 1-3.400 2.700z" fill="#fff" /><path d="M2 18C6 12 16 4 22 4" stroke="#e8f8dc" /></Svg>
        </Task>
        <Task label="邮件"><Svg c={T6} vb="0 0 24 24"><path d="M0 8L12 2l12 6v13H0z" fill="#fff" /><path d="M2 8.500h20L13.500 13.500 17 18 7 12.500z" fill="#04151b" /></Svg></Task>
        <Task label="广联达" on><AppLogo c={T6} /></Task>
        <Task label="广联达G" w="w-[39px]" on>
          <Svg c={T6} vb="0 0 24 24"><path d="M23 2c-2 3-4 3-6 2.500C9 2.500 6.500 8 7.500 12.500c1 4 6 6 9.500 3.500 1-1 1-2 .5-2.500H13l2-4h8c1 6-3 14-11.500 14C4 23.500.5 18 1 12 1.500 5 7 .5 13 1c4 .3 7 2 10 1z" fill="#2196ee" /></Svg>
        </Task>
        <Task label="便笺" w="w-[38px]" on>
          <Svg c={T6} vb="0 0 24 24"><rect width="24" height="24" rx="2" fill="#f5a51c" /><rect x="1.500" y="1.500" width="21" height="21" rx="1" stroke="#ffd98a" /><path d="M3 6l13-2 2 15-12 2z" fill="#fff" /><path d="M6 9l7-1M6 12l8-1M7 15l7-1" stroke="#8a7a58" /><path d="M21 3l-8 12-1.500 3" stroke="#8a4210" strokeWidth="2" /></Svg>
        </Task>
        <button className="ml-[13px] shrink-0 whitespace-nowrap text-[12px]">链接</button>
        <div className="ml-auto flex shrink-0 items-center pr-2">
          <Task label="人脉" w="w-9"><Svg c="h-[17px] w-[17px]" vb="0 0 17 17"><circle cx="6" cy="8" r="2.700" stroke="#fff" /><path d="M1.500 16c0-3.500 2-5 4.500-5s4.500 1.500 4.500 5" stroke="#fff" /><circle cx="11.500" cy="3.500" r="2.700" stroke="#fff" /><path d="M10 7c3-.8 5.500.8 5.500 4" stroke="#fff" /></Svg></Task>
          <Task label="显示隐藏的图标" w="w-9"><Svg c="h-3 w-3" vb="0 0 12 12"><path d="M.5 9L6 3.500 11.500 9" stroke="#fff" strokeWidth="1.200" /></Svg></Task>
          <Task label="托盘程序" w="w-3"><Svg><path d="M0 0h16v16H0z" fill="#7d1c08" /><path d="M1 14c3-1 4-3 3-5S5 3 9 3l5-2-2 4 3 2-4 1 2 4-4-2-4 5M2 3l3 2M7 15l7-1" stroke="#e5762a" strokeWidth="1.300" /></Svg></Task>
          <Task label="通知提醒" w="w-9"><Svg c="h-[14px] w-[14px]" vb="0 0 14 14"><path d="M7 0C4 0 3 2.500 3 5c0 3-.5 4-3 6h14c-2.500-2-3-3-3-6 0-2.500-1-5-4-5zM5 12h4v1.500H5z" fill="#fff" /></Svg></Task>
          <Task label="电源" w="w-3"><Svg><path d="M5.500 5.500h9v6h-9zM15.500 7.500v2" stroke="#fff" /><path d="M7 7h5v3H7z" fill="#fff" /><path d="M1.500 1v3M4.500 1v3M.500 4h5v2L4 7.500H2L.500 6zM3 7.500V11h2" stroke="#fff" /></Svg></Task>
          <Task label="网络" w="w-9"><Svg c="h-[14px] w-[14px]" vb="0 0 14 14"><path d="M1 13C1 7 6 2 13 1.500M4 13c0-4.500 4-8 9-8.500M7 13c0-3 3-5 6-5.500" stroke="#cfd5d7" strokeWidth="1.200" /><circle cx="11.500" cy="12" r="1.500" fill="#fff" /></Svg></Task>
          <Task label="音量" w="w-3"><Svg><path d="M.5 6h3L7 2.500v11L3.500 10h-3z" stroke="#fff" /><path d="M9.500 5.500c1 1.500 1 3.500 0 5M11.500 3.500c2.200 2.500 2.200 6.500 0 9M13.500 2c2.500 3.500 2.500 8.500 0 12" stroke="#fff" /></Svg></Task>
          <Task label="触摸键盘" w="w-[42px]"><Svg c="h-[13px] w-[23px]" vb="0 0 23 13"><path d="M.5.5h22v12H.5z" stroke="#fff" /><path d="M3 3.500h17M3 6.500h17" stroke="#fff" strokeDasharray="1.500 1.500" /><path d="M6 9.500h11" stroke="#fff" /></Svg></Task>
          <button className="w-4 text-center text-[13px]">中</button>
          <Task label="搜狗输入法" w="w-10"><Svg><path d="M1 3l11-3 3.500 1.500-1 12L4 16l-3.500-2z" fill="#f0481c" /><path d="M12 4c-3-1-7-.5-7 1.800S11.500 7.500 11.500 10 7 12.500 4 11.500" stroke="#fff" strokeWidth="2" /></Svg></Task>
          <div className="flex w-[70px] flex-col items-center text-[12px] leading-[19px]">
            <time>17:40</time>
            <time>2018/9/20</time>
          </div>
          <button aria-label="操作中心" className="relative ml-[13px] flex w-[34px] pt-px">
            <Svg><path d="M0 0h16v12H7l-3.500 4v-4H0z" fill="#fff" /><path d="M2.500 3.500h11M2.500 6h11M2.500 8.500h7" stroke="#04151b" /></Svg>
            <span className="absolute top-[5px] left-[7px] flex h-4 w-4 items-center justify-center rounded-full border border-[#8a8a8a] bg-[#333] text-[11px] font-bold">2</span>
          </button>
        </div>
      </div>
    </footer>
  );
}

export default function App() {
  return (
    <div className="relative flex h-screen min-h-[700px] flex-col overflow-hidden bg-[#f0f0f0] font-['Open_Sans','Noto_Sans_CJK_SC',sans-serif] text-[12px] leading-4 text-black">
      <TopBars />
      <main className="flex min-h-0 flex-1 pt-px">
        <LeftPanel />
        <div className="ml-[6px] flex min-w-0 flex-1 flex-col">
          <ComponentToolbar />
          <div className="flex min-h-0 flex-1 gap-[3px] pr-px">
            <MiddlePanel />
            <PropertyPanel />
          </div>
        </div>
      </main>
      <div className="mt-px flex h-[21px] shrink-0 items-center gap-[2px] border-t border-white">
        <StatusCell w="w-[148px] shrink-0" t="" />
        <StatusCell w="w-[78px] shrink-0" t="层高:4.5m" />
        <StatusCell w="w-[98px] shrink-0" t="底标高:-0.05m" />
        <StatusCell w="w-[47px] shrink-0" t="0" />
        <StatusCell w="min-w-0 flex-1" t="缺省为当前楼层底标高" />
        <StatusCell w="w-[70px] shrink-0" t="372.1 FPS" />
      </div>
      <Taskbar />
      <div className="absolute -top-[16px] left-[466px] flex h-9 w-[38px] items-center justify-center rounded-full border-2 border-white bg-linear-to-b from-[#6fe08a] to-[#22ab48] pt-[9px] text-[11px] font-bold text-white shadow-[0_1px_4px_rgba(0,0,0,0.6)]">
        77
      </div>
    </div>
  );
}
